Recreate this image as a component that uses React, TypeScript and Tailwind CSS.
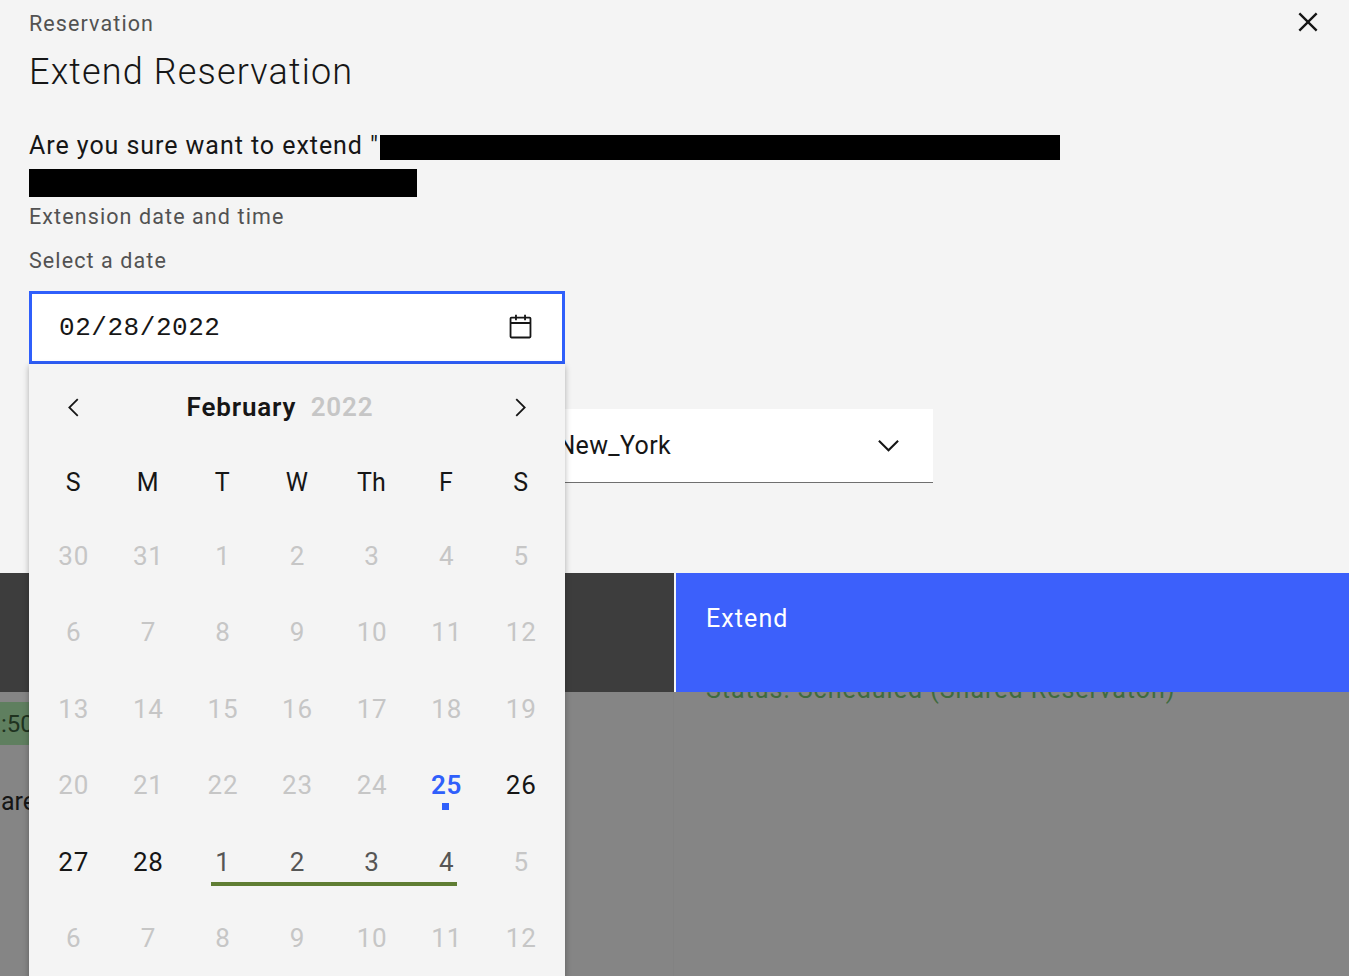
const weekDays = ['S', 'M', 'T', 'W', 'Th', 'F', 'S']

type Day = { label: number; tone: 'off' | 'on' | 'range' | 'today'; bar?: boolean }

const off = (labels: number[]): Day[] => labels.map((label) => ({ label, tone: 'off' }))

const days: Day[] = [
  ...off([30, 31, 1, 2, 3, 4, 5, 6, 7, 8, 9, 10, 11, 12, 13, 14, 15, 16, 17, 18, 19, 20, 21, 22, 23, 24]),
  { label: 25, tone: 'today' },
  { label: 26, tone: 'on' },
  { label: 27, tone: 'on' },
  { label: 28, tone: 'on' },
  { label: 1, tone: 'range', bar: true },
  { label: 2, tone: 'range' },
  { label: 3, tone: 'range' },
  { label: 4, tone: 'range' },
  ...off([5, 6, 7, 8, 9, 10, 11, 12]),
]

const toneClass = {
  off: 'text-[#c6c6c6]',
  on: 'text-[#161616]',
  range: 'text-[#565656]',
  today: 'text-[#2f5ffb] font-semibold',
}

function Calendar() {
  return (
    <div className="absolute left-0 top-[73px] z-20 w-[536px] h-[640px] bg-[#f4f4f4] shadow-[0_2px_6px_rgba(0,0,0,0.3)] px-[7px]">
      <div className="h-[79px] pt-[7px] flex items-center justify-between px-[23px]">
        <svg width="29" height="29" viewBox="0 0 16 16" fill="#161616">
          <path d="M5 8l5-5 .7.7L6.4 8l4.3 4.3-.7.7z" />
        </svg>
        <p className="mr-[34px] text-[26px] leading-[32px] font-semibold text-[#161616] tracking-[0.85px]">
          February <span className="ml-[7px] text-[#c6c6c6]">2022</span>
        </p>
        <svg width="29" height="29" viewBox="0 0 16 16" fill="#161616">
          <path d="M11 8L6 13l-.7-.7L9.6 8 5.3 3.7 6 3z" />
        </svg>
      </div>
      <div className="grid grid-cols-7 auto-rows-[76.4px] text-[26px] tracking-[0.8px]">
        {weekDays.map((day, index) => (
          <div key={index} className="pt-[4px] flex items-center justify-center text-[25px] tracking-[0.3px] text-[#161616]">
            {day}
          </div>
        ))}
        {days.map((day, index) => (
          <div key={index} className={`relative pb-[2px] pl-[1px] flex items-center justify-center ${toneClass[day.tone]}`}>
            {day.label}
            {day.tone === 'today' && <span className="absolute left-[33px] top-[54px] w-[7px] h-[7px] bg-[#2f5ffb]" />}
            {day.bar && <span className="absolute left-[26px] top-[57px] w-[246px] h-[4px] bg-[#5f7d33]" />}
          </div>
        ))}
      </div>
    </div>
  )
}

export default function App() {
  return (
    <div className="relative h-[976px] overflow-hidden bg-[#858585] font-['Roboto',sans-serif]">
      <div className="relative z-10 h-[692px] flex flex-col bg-[#f4f4f4]">
        <div className="relative h-[573px] pl-[29px]">
          <button className="absolute right-[22px] top-[3px]">
            <svg width="38" height="38" viewBox="0 0 16 16" fill="#161616">
              <path d="M12 4.7L11.3 4 8 7.3 4.7 4 4 4.7 7.3 8 4 11.3 4.7 12 8 8.7 11.3 12 12 11.3 8.7 8z" />
            </svg>
          </button>
          <p className="pt-[11px] text-[21.5px] leading-[26px] tracking-[1.1px] text-[#525252]">Reservation</p>
          <h1 className="mt-[12px] text-[36px] leading-[46px] font-light text-[#161616] tracking-[1.15px]">Extend Reservation</h1>
          <div className="mt-[40px] flex items-center h-[25px]">
            <p className="w-[351px] pb-[4px] whitespace-nowrap text-[25px] leading-[25px] text-[#161616] tracking-[0.95px]">Are you sure want to extend "</p>
            <div className="w-[680px] h-[25px] bg-black" />
          </div>
          <div className="mt-[9px] w-[388px] h-[28px] bg-black" />
          <p className="mt-[7px] text-[21.5px] leading-[26px] tracking-[1.1px] text-[#525252]">Extension date and time</p>
          <p className="mt-[18px] text-[21.5px] leading-[26px] tracking-[1.1px] text-[#525252]">Select a date</p>
          <div className="relative mt-[17px] w-[536px]">
            <div className="h-[73px] flex items-center justify-between bg-white border-[3px] border-[#2f5ffb] pl-[27px] pr-[27px]">
              <span className="pt-[2px] font-['Liberation_Mono',monospace] text-[26px] tracking-[0.55px] text-[#161616]">02/28/2022</span>
              <svg width="29" height="29" viewBox="0 0 16 16" fill="#161616">
                <path d="M13 2H11V1H10V2H6V1H5V2H3A1 1 0 0 0 2 3V13a1 1 0 0 0 1 1H13a1 1 0 0 0 1-1V3A1 1 0 0 0 13 2Zm0 11H3V6H13Zm0-8H3V3H5V4H6V3h4V4h1V3h2Z" />
              </svg>
            </div>
            <Calendar />
          </div>
          <div className="mt-[45px] w-[904px] h-[74px] flex items-center justify-end gap-[201px] bg-white border-b border-[#6f6f6f] pr-[28px]">
            <span className="pt-[1px] text-[25px] tracking-[0.35px] text-[#161616]">America/New_York</span>
            <svg width="33" height="33" viewBox="0 0 16 16" fill="#161616">
              <path d="M8 11L3 6l.7-.7L8 9.6l4.3-4.3.7.7z" />
            </svg>
          </div>
        </div>
        <div className="flex h-[119px]">
          <div className="w-[674px] bg-[#3d3d3d]" />
          <div className="w-[2px] bg-[#f4f4f4]" />
          <div className="flex-1 bg-[#3c60fb] pl-[30px] pt-[31px] text-[25px] leading-[30px] tracking-[1.1px] text-white">Extend</div>
        </div>
      </div>
      <div className="flex h-[284px]">
        <div className="w-[674px] pt-[10px] overflow-hidden border-r border-[#828282]">
          <div className="w-[60px] h-[43px] flex items-center bg-[#5f7f5f] text-[24px] pl-[1px] text-[#1f331f]">:50</div>
          <p className="mt-[42px] pl-[1px] text-[25px] leading-[30px] text-[#161616]">are</p>
        </div>
        <p className="pl-[32px] -mt-[17px] text-[25px] leading-[30px] tracking-[1px] text-[#3f6b3f]">Status: Scheduled (Shared Reservaton)</p>
      </div>
    </div>
  )
}
